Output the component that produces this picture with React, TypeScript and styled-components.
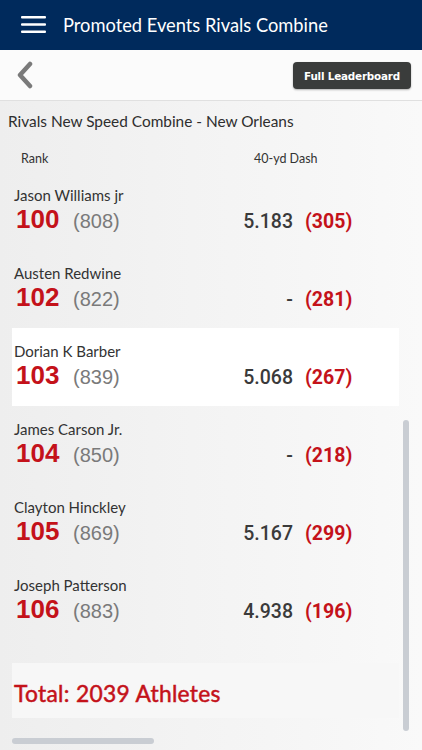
import { FC } from "react";
import styled, { createGlobalStyle } from "styled-components";

const GlobalStyle = createGlobalStyle`
  html, body {
    margin: 0;
    padding: 0;
    height: 750px;
    overflow: hidden;
    background: #f3f3f3;
  }
  * {
    box-sizing: border-box;
  }
`;

const Screen = styled.div`
  width: 422px;
  height: 750px;
  display: flex;
  flex-flow: column nowrap;
  font-family: Lato, "Open Sans", sans-serif;
`;

const Header = styled.div`
  height: 50px;
  background-color: #002a5c;
  color: #ffffff;
  display: flex;
  flex-flow: row nowrap;
  align-items: center;
  padding-left: 21px;
  flex-shrink: 0;
`;

const HeaderTitle = styled.span`
  font-size: 18.3px;
  padding-left: 17px;
`;

const SubBar = styled.div`
  height: 51px;
  background-color: #fbfbfb;
  border-bottom: 1px solid #e0e0e0;
  display: flex;
  flex-flow: row nowrap;
  align-items: center;
  justify-content: space-between;
  padding: 0 11px 0 16px;
  flex-shrink: 0;
`;

const LeaderboardButton = styled.button`
  background-color: #3a3c3b;
  color: #ffffff;
  border: none;
  border-radius: 4px;
  height: 27px;
  width: 118px;
  margin-top: 1px;
  font-family: "DejaVu Sans", sans-serif;
  font-weight: 700;
  font-size: 10.4px;
  letter-spacing: -0.2px;
  box-shadow: 0 1px 2px rgba(0, 0, 0, 0.3);
`;

const Content = styled.div`
  position: relative;
  flex: 1;
  background: linear-gradient(to right, #eeeeee, #f9f9f9);
  padding: 0 23px 0 12px;
  display: flex;
  flex-flow: column nowrap;
`;

const EventTitle = styled.div`
  font-size: 15.4px;
  color: #2e2e2e;
  margin-left: -4px;
  padding-top: 11px;
  height: 38px;
`;

const ColumnHeads = styled.div`
  display: grid;
  grid-template-columns: 233px 1fr;
  font-size: 12.5px;
  color: #333333;
  padding-left: 9px;
  padding-top: 12px;
  height: 33px;
`;

const Row = styled.div<{ $active?: boolean }>`
  height: 78px;
  background-color: ${(p) => (p.$active ? "#ffffff" : "transparent")};
  padding: 14px 0 0 2px;
  display: flex;
  flex-flow: column nowrap;
`;

const Name = styled.span`
  font-size: 15px;
  color: #333333;
  height: 18px;
`;

const Stats = styled.div`
  display: grid;
  grid-template-columns: 59px 100px 120px 1fr;
  align-items: baseline;
  font-family: "Liberation Sans", Arial, sans-serif;
`;

const Rank = styled.span`
  font-size: 26px;
  font-weight: 700;
  color: #c4121a;
  padding-left: 2px;
`;

const Score = styled.span`
  font-size: 20px;
  color: #7a7a7a;
`;

const Time = styled.span`
  font-family: Roboto, sans-serif;
  font-size: 19.5px;
  font-weight: 500;
  color: #3a3a3a;
  text-align: right;
`;

const Points = styled.span`
  font-family: Roboto, sans-serif;
  font-size: 19.5px;
  font-weight: 700;
  color: #c4121a;
  padding-left: 12px;
`;

const TotalBox = styled.div`
  margin-top: 23px;
  height: 55px;
  background-color: #f7f7f7;
  display: flex;
  align-items: center;
  padding: 4px 0 0 2px;
  font-size: 22.8px;
  letter-spacing: 0.3px;
  -webkit-text-stroke: 0.5px #c4121a;
  color: #c4121a;
`;

const VScroll = styled.div`
  position: absolute;
  right: 13px;
  top: 319px;
  width: 6px;
  height: 311px;
  border-radius: 3px;
  background-color: #c9cdd3;
`;

const HScroll = styled.div`
  position: absolute;
  left: 12px;
  bottom: 6px;
  width: 142px;
  height: 6px;
  border-radius: 3px;
  background-color: #c9cdd3;
`;

const athletes = [
  { id: 1, name: "Jason Williams jr", rank: 100, score: 808, time: "5.183", points: 305 },
  { id: 2, name: "Austen Redwine", rank: 102, score: 822, time: "-", points: 281 },
  { id: 3, name: "Dorian K Barber", rank: 103, score: 839, time: "5.068", points: 267, active: true },
  { id: 4, name: "James Carson Jr.", rank: 104, score: 850, time: "-", points: 218 },
  { id: 5, name: "Clayton Hinckley", rank: 105, score: 869, time: "5.167", points: 299 },
  { id: 6, name: "Joseph Patterson", rank: 106, score: 883, time: "4.938", points: 196 },
];

const MenuIcon: FC = () => (
  <svg width="25" height="18" viewBox="0 0 25 18">
    <rect x="0" y="0" width="25" height="2.4" rx="1" fill="#ffffff" />
    <rect x="0" y="7.3" width="25" height="2.4" rx="1" fill="#ffffff" />
    <rect x="0" y="14.6" width="25" height="2.4" rx="1" fill="#ffffff" />
  </svg>
);

const BackIcon: FC = () => (
  <svg width="20" height="28" viewBox="0 0 20 28">
    <path
      d="M14 3 L4 14 L14 25"
      fill="none"
      stroke="#7a7a7a"
      strokeWidth="4.5"
      strokeLinecap="round"
      strokeLinejoin="round"
    />
  </svg>
);

const App: FC = () => {
  return (
    <>
      <GlobalStyle />
      <Screen>
        <Header>
          <MenuIcon />
          <HeaderTitle>Promoted Events Rivals Combine</HeaderTitle>
        </Header>
        <SubBar>
          <BackIcon />
          <LeaderboardButton>Full Leaderboard</LeaderboardButton>
        </SubBar>
        <Content>
          <EventTitle>Rivals New Speed Combine - New Orleans</EventTitle>
          <ColumnHeads>
            <span>Rank</span>
            <span>40-yd Dash</span>
          </ColumnHeads>
          {athletes.map((a) => (
            <Row key={a.id} $active={a.active}>
              <Name>{a.name}</Name>
              <Stats>
                <Rank>{a.rank}</Rank>
                <Score>({a.score})</Score>
                <Time>{a.time}</Time>
                <Points>({a.points})</Points>
              </Stats>
            </Row>
          ))}
          <TotalBox>Total: 2039 Athletes</TotalBox>
          <VScroll />
          <HScroll />
        </Content>
      </Screen>
    </>
  );
};

export default App;
